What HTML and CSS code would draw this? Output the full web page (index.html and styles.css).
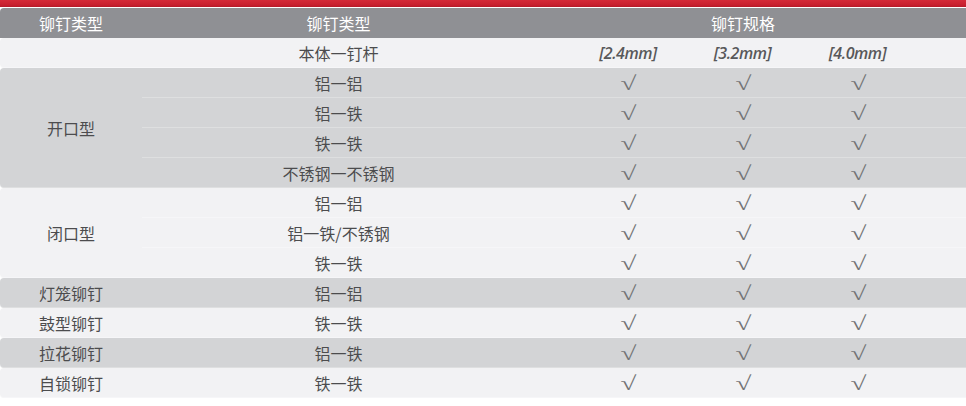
FILE: index.html
```html
<!DOCTYPE html>
<html lang="zh-CN">
<head>
<meta charset="utf-8">
<title>铆钉规格</title>
<link rel="stylesheet" href="styles.css">
</head>
<body>
<div class="topbar"></div>
<table class="spec">
  <colgroup>
    <col class="c-type"><col class="c-mat"><col class="c-size"><col class="c-size2"><col class="c-size2"><col class="c-rest">
  </colgroup>
  <thead>
    <tr class="head">
      <th class="first">铆钉类型</th>
      <th class="mat">铆钉类型</th>
      <th colspan="3">铆钉规格</th>
      <th></th>
    </tr>
  </thead>
  <tbody>
    <tr class="light">
      <td class="first"></td>
      <td class="mat">本体一钉杆</td>
      <td class="size">[2.4mm]</td>
      <td class="size">[3.2mm]</td>
      <td class="size">[4.0mm]</td>
      <td></td>
    </tr>
    <tr class="gray">
      <td class="first" rowspan="4">开口型</td>
      <td class="mat">铝一铝</td>
      <td class="ok"><span>√</span></td><td class="ok"><span>√</span></td><td class="ok"><span>√</span></td><td></td>
    </tr>
    <tr class="gray">
      <td class="mat">铝一铁</td>
      <td class="ok"><span>√</span></td><td class="ok"><span>√</span></td><td class="ok"><span>√</span></td><td></td>
    </tr>
    <tr class="gray">
      <td class="mat">铁一铁</td>
      <td class="ok"><span>√</span></td><td class="ok"><span>√</span></td><td class="ok"><span>√</span></td><td></td>
    </tr>
    <tr class="gray">
      <td class="mat">不锈钢一不锈钢</td>
      <td class="ok"><span>√</span></td><td class="ok"><span>√</span></td><td class="ok"><span>√</span></td><td></td>
    </tr>
    <tr class="light">
      <td class="first" rowspan="3">闭口型</td>
      <td class="mat">铝一铝</td>
      <td class="ok"><span>√</span></td><td class="ok"><span>√</span></td><td class="ok"><span>√</span></td><td></td>
    </tr>
    <tr class="light">
      <td class="mat">铝一铁/不锈钢</td>
      <td class="ok"><span>√</span></td><td class="ok"><span>√</span></td><td class="ok"><span>√</span></td><td></td>
    </tr>
    <tr class="light">
      <td class="mat">铁一铁</td>
      <td class="ok"><span>√</span></td><td class="ok"><span>√</span></td><td class="ok"><span>√</span></td><td></td>
    </tr>
    <tr class="gray">
      <td class="first">灯笼铆钉</td>
      <td class="mat">铝一铝</td>
      <td class="ok"><span>√</span></td><td class="ok"><span>√</span></td><td class="ok"><span>√</span></td><td></td>
    </tr>
    <tr class="light">
      <td class="first">鼓型铆钉</td>
      <td class="mat">铁一铁</td>
      <td class="ok"><span>√</span></td><td class="ok"><span>√</span></td><td class="ok"><span>√</span></td><td></td>
    </tr>
    <tr class="gray">
      <td class="first">拉花铆钉</td>
      <td class="mat">铝一铁</td>
      <td class="ok"><span>√</span></td><td class="ok"><span>√</span></td><td class="ok"><span>√</span></td><td></td>
    </tr>
    <tr class="light">
      <td class="first">自锁铆钉</td>
      <td class="mat">铁一铁</td>
      <td class="ok"><span>√</span></td><td class="ok"><span>√</span></td><td class="ok"><span>√</span></td><td></td>
    </tr>
  </tbody>
</table>
</body>
</html>
```

FILE: styles.css
```css
html, body {
  margin: 0;
  padding: 0;
  background: #ffffff;
}

body {
  width: 966px;
  font-family: "Noto Sans CJK SC", "Noto Sans", sans-serif;
  color: #4c4c4e;
}

.topbar {
  height: 7px;
  margin-bottom: 1px;
  background: linear-gradient(to bottom, #d52a38 0%, #c8202f 70%, #b51a29 100%);
}

.spec {
  width: 966px;
  border-collapse: separate;
  border-spacing: 0;
  table-layout: fixed;
}

.c-type { width: 142px; }
.c-mat { width: 429px; }
.c-size { width: 114px; }
.c-size2 { width: 115px; }
.c-rest { width: 51px; }

.spec th,
.spec td {
  height: 30px;
  padding: 0;
  text-align: center;
  vertical-align: middle;
  font-size: 16px;
  font-weight: normal;
  line-height: 20px;
  box-sizing: border-box;
}

.head th {
  background: #8f9094;
  color: #ffffff;
}

.head th.first {
  border-radius: 4px 0 0 0;
}

.spec .mat {
  padding-right: 36px;
}

.light td {
  background: #f2f2f4;
  box-shadow: inset 0 -1px 0 rgba(255, 255, 255, 0.35);
}

.gray td {
  background: #d3d4d6;
  box-shadow: inset 0 -1px 0 rgba(255, 255, 255, 0.25);
}

.spec td.first {
  border-radius: 4px 0 0 4px;
}

.spec td.size {
  font-family: "Open Sans", "Liberation Sans", sans-serif;
  font-style: italic;
  font-weight: 600;
  font-size: 16px;
  color: #58585a;
  letter-spacing: -0.4px;
}

.spec td.ok {
  font-family: "Liberation Serif", "DejaVu Serif", serif;
  font-size: 20px;
  line-height: 22px;
  color: #747476;
}

.spec td.ok span {
  display: inline-block;
  transform: scaleX(1.45);
  margin-left: 1px;
}
```
